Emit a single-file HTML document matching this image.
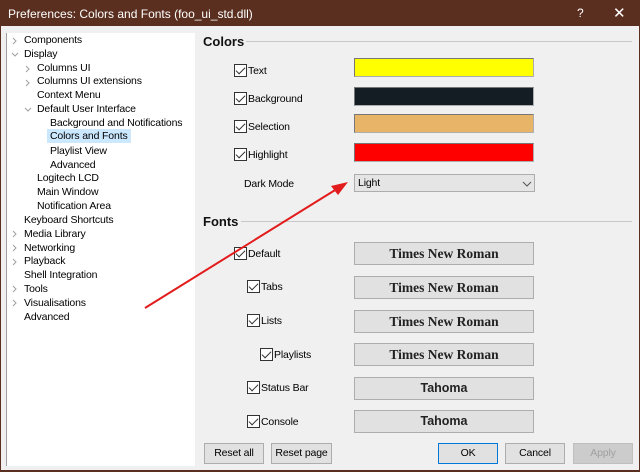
<!DOCTYPE html>
<html><head><style>
*{margin:0;padding:0;box-sizing:border-box}
body{width:640px;height:472px;background:#f0f0f0;font-family:"Liberation Sans",sans-serif;font-size:10.5px;letter-spacing:-0.15px;color:#000;position:relative;overflow:hidden}
.a{position:absolute;white-space:nowrap}
.title{left:0;top:0;width:640px;height:26px;background:#5a2f1f;color:#fff;font-size:12px;letter-spacing:0;padding:7px 0 0 8px}
.tree{left:6px;top:33px;width:189px;height:433px;background:#fff;border-left:1px solid #a0a0a0}
.tr{position:absolute;white-space:nowrap}
.sel{background:#cce8ff}
.cb{position:absolute;width:13px;height:13px;border:1px solid #333;background:#fff}
.cb:after{content:"";position:absolute;left:3px;top:0px;width:4px;height:8px;border:solid #333;border-width:0 1.2px 1.2px 0;transform:rotate(45deg)}
.sw{position:absolute;left:354px;width:180px;height:19px;border:1px solid #adadad;border-top-color:#777;border-left-color:#777}
.fb{position:absolute;left:354px;width:180px;height:23px;background:#e1e1e1;border:1px solid #adadad;text-align:center;font-family:"Liberation Serif",serif;font-weight:bold;font-size:13.5px;letter-spacing:0;line-height:21px;color:#222}
.fb.t{font-family:"Liberation Sans",sans-serif;font-size:12.5px}
.hd{position:absolute;font-weight:bold;font-size:13px;letter-spacing:0;color:#111}
.ln{position:absolute;height:1px;background:#c8c8c8}
.bt{position:absolute;top:443px;height:21px;background:#e1e1e1;border:1px solid #adadad;text-align:center;line-height:19px}
</style></head><body>
<div class="a title">Preferences: Colors and Fonts (foo_ui_std.dll)<span style="position:absolute;left:577px;top:6px;font-size:12px">?</span><span style="position:absolute;left:613px;top:4px;font-size:15px">✕</span></div>
<div style="position:absolute;left:0;top:26px;width:1px;height:446px;background:#5a2f1f"></div>
<div style="position:absolute;right:0;top:26px;width:1px;height:446px;background:#5a2f1f"></div>
<div style="position:absolute;left:0;top:470px;width:640px;height:2px;background:#5a2f1f"></div>
<div class="a tree">
<span class="tr" style="left:17px;top:1px">Components</span>
<span class="tr" style="left:17px;top:15px">Display</span>
<span class="tr" style="left:30px;top:29px">Columns UI</span>
<span class="tr" style="left:30px;top:42px">Columns UI extensions</span>
<span class="tr" style="left:30px;top:56px">Context Menu</span>
<span class="tr" style="left:30px;top:70px">Default User Interface</span>
<span class="tr" style="left:43px;top:84px">Background and Notifications</span>
<span class="tr sel" style="left:40px;top:96px;padding:1px 3px">Colors and Fonts</span>
<span class="tr" style="left:43px;top:112px">Playlist View</span>
<span class="tr" style="left:43px;top:126px">Advanced</span>
<span class="tr" style="left:30px;top:139px">Logitech LCD</span>
<span class="tr" style="left:30px;top:153px">Main Window</span>
<span class="tr" style="left:30px;top:167px">Notification Area</span>
<span class="tr" style="left:17px;top:181px">Keyboard Shortcuts</span>
<span class="tr" style="left:17px;top:195px">Media Library</span>
<span class="tr" style="left:17px;top:209px">Networking</span>
<span class="tr" style="left:17px;top:222px">Playback</span>
<span class="tr" style="left:17px;top:236px">Shell Integration</span>
<span class="tr" style="left:17px;top:250px">Tools</span>
<span class="tr" style="left:17px;top:264px">Visualisations</span>
<span class="tr" style="left:17px;top:278px">Advanced</span>
</div>
<svg width="40" height="320" style="position:absolute;left:0;top:0" fill="none" stroke="#a0a0a0" stroke-width="1">
<path d="M13 38l3 3-3 3M13 231l3 3-3 3M13 245l3 3-3 3M13 259l3 3-3 3M13 286l3 3-3 3M13 300l3 3-3 3M26 66l3 3-3 3M26 80l3 3-3 3"/>
<path d="M12 53l3 3 3-3M25 108l3 3 3-3"/>
</svg>
<div class="hd" style="left:203px;top:34px">Colors</div><div class="ln" style="left:246px;top:41px;width:386px"></div>
<div class="cb" style="left:234px;top:64px"></div><span class="a" style="left:248px;top:65px">Text</span>
<div class="cb" style="left:234px;top:92px"></div><span class="a" style="left:248px;top:93px">Background</span>
<div class="cb" style="left:234px;top:120px"></div><span class="a" style="left:248px;top:121px">Selection</span>
<div class="cb" style="left:234px;top:148px"></div><span class="a" style="left:248px;top:149px">Highlight</span>
<div class="sw" style="top:58px;background:#ffff00"></div>
<div class="sw" style="top:87px;background:#141c24"></div>
<div class="sw" style="top:114px;background:#e8b468"></div>
<div class="sw" style="top:143px;background:#ff0000"></div>
<span class="a" style="left:244px;top:178px">Dark Mode</span>
<div class="a" style="left:354px;top:174px;width:181px;height:18px;background:#e5e5e5;border:1px solid #adadad;padding:2px 0 0 3px">Light</div>
<svg width="10" height="6" style="position:absolute;left:522px;top:181px" fill="none" stroke="#555"><path d="M1 1l4 4 4-4"/></svg>
<div class="hd" style="left:203px;top:214px">Fonts</div><div class="ln" style="left:241px;top:221px;width:391px"></div>
<div class="cb" style="left:234px;top:247px"></div><span class="a" style="left:248px;top:248px">Default</span>
<div class="cb" style="left:247px;top:280px"></div><span class="a" style="left:261px;top:281px">Tabs</span>
<div class="cb" style="left:247px;top:314px"></div><span class="a" style="left:261px;top:315px">Lists</span>
<div class="cb" style="left:260px;top:348px"></div><span class="a" style="left:274px;top:349px">Playlists</span>
<div class="cb" style="left:247px;top:381px"></div><span class="a" style="left:261px;top:382px">Status Bar</span>
<div class="cb" style="left:247px;top:415px"></div><span class="a" style="left:261px;top:416px">Console</span>
<div class="fb" style="top:242px">Times New Roman</div>
<div class="fb" style="top:276px">Times New Roman</div>
<div class="fb" style="top:310px">Times New Roman</div>
<div class="fb" style="top:343px">Times New Roman</div>
<div class="fb t" style="top:377px">Tahoma</div>
<div class="fb t" style="top:410px">Tahoma</div>
<div class="bt" style="left:204px;width:60px">Reset all</div>
<div class="bt" style="left:271px;width:61px">Reset page</div>
<div class="bt" style="left:438px;width:60px;border:1px solid #0078d7">OK</div>
<div class="bt" style="left:505px;width:60px">Cancel</div>
<div class="bt" style="left:573px;width:60px;color:#a0a0a0;background:#ccc;border-color:#bfbfbf">Apply</div>
<svg width="640" height="472" style="position:absolute;left:0;top:0">
<line x1="145" y1="308" x2="340" y2="187" stroke="#e21c1c" stroke-width="2"/>
<polygon points="348,182 331,186 338,195" fill="#e21c1c"/>
</svg>
</body></html>
